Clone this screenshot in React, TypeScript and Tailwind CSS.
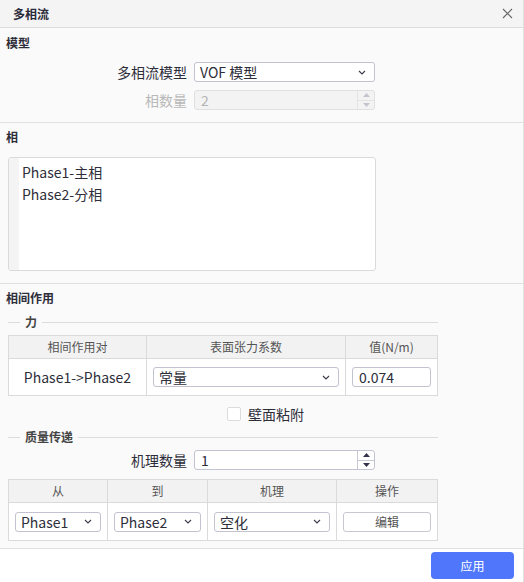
import React from "react";

const Chevron = () => (
  <svg width="8" height="5" viewBox="0 0 8 5" className="shrink-0">
    <path d="M1 1 L4 4 L7 1" fill="none" stroke="#3a3a4a" strokeWidth="1.1" />
  </svg>
);

const Select = ({ value, className = "" }: { value: string; className?: string }) => (
  <div
    className={`flex items-center justify-between h-[20px] bg-white border border-[#c2c2d0] rounded-[3px] pl-[5px] pr-[8px] text-[14px] leading-[18px] text-[#2e2e3a] ${className}`}
  >
    <span>{value}</span>
    <Chevron />
  </div>
);

const Spin = ({ value, disabled }: { value: string; disabled?: boolean }) => (
  <div
    className={`flex h-[20px] w-[181px] rounded-[3px] border ${
      disabled ? "bg-[#f3f3f3] border-[#e0e0e0] text-[#b5b5b5]" : "bg-white border-[#c2c2d0] text-[#2e2e3a]"
    }`}
  >
    <div className="flex-1 pl-[6px] text-[14px] leading-[18px]">{value}</div>
    <div className={`w-[17px] flex flex-col border-l ${disabled ? "border-[#e4e4e4]" : "border-[#c8c8d4]"}`}>
      <div className={`flex-1 flex items-center justify-center border-b ${disabled ? "border-[#e4e4e4]" : "border-[#c8c8d4]"}`}>
        <svg width="7" height="4" viewBox="0 0 7 4">
          <path d="M0 4 L3.5 0 L7 4 Z" fill={disabled ? "#c4c4cc" : "#33334a"} />
        </svg>
      </div>
      <div className="flex-1 flex items-center justify-center">
        <svg width="7" height="4" viewBox="0 0 7 4">
          <path d="M0 0 L3.5 4 L7 0 Z" fill={disabled ? "#c4c4cc" : "#33334a"} />
        </svg>
      </div>
    </div>
  </div>
);

const Legend = ({ text }: { text: string }) => (
  <div className="ml-[2px] w-[430px] h-[18px] flex items-center">
    <div className="w-[12px] h-px bg-[#dcdcdc]" />
    <div className="px-[5px] text-[12px] font-bold leading-[18px] text-[#444]">{text}</div>
    <div className="flex-1 h-px bg-[#dcdcdc]" />
  </div>
);

const HCell = ({ children, last }: { children: React.ReactNode; last?: boolean }) => (
  <div className={`flex items-center justify-center text-[12px] text-[#555] ${last ? "" : "border-r border-[#dadada]"}`}>
    {children}
  </div>
);

const BCell = ({ children, last, className = "" }: { children: React.ReactNode; last?: boolean; className?: string }) => (
  <div className={`flex items-center px-[6px] ${last ? "" : "border-r border-[#dadada]"} ${className}`}>{children}</div>
);

export default function App() {
  return (
    <div className="w-[524px] h-[582px] flex flex-col bg-[#fafafa] border-r border-[#e2e2e2] font-['Noto_Sans_CJK_SC',sans-serif] text-[#2e2e3a] overflow-hidden">
      {/* Title bar */}
      <div className="h-[28px] shrink-0 flex items-center justify-between pl-[13px] pr-[10px] bg-[#f4f4f4] border-b border-[#dcdcdc]">
        <span className="text-[12px] font-bold leading-[16px] text-[#2a2a3a]">多相流</span>
        <svg width="11" height="11" viewBox="0 0 11 11">
          <path d="M1 1 L10 10 M10 1 L1 10" stroke="#666" strokeWidth="1.1" />
        </svg>
      </div>

      {/* 模型 */}
      <div className="shrink-0 px-[6px] pt-[6px] pb-[12px] border-b border-[#e0e0e0]">
        <div className="h-[18px] text-[12px] font-bold leading-[18px]">模型</div>
        <div className="mt-[10px] flex items-center gap-[7px]">
          <div className="w-[181px] text-right text-[14px] leading-[19px]">多相流模型</div>
          <Select value="VOF 模型" className="w-[181px]" />
        </div>
        <div className="mt-[8px] flex items-center gap-[7px]">
          <div className="w-[181px] text-right text-[14px] leading-[19px] text-[#b8b8b8]">相数量</div>
          <Spin value="2" disabled />
        </div>
      </div>

      {/* 相 */}
      <div className="shrink-0 px-[6px] pt-[5px] pb-[12px] border-b border-[#e0e0e0]">
        <div className="h-[18px] text-[12px] font-bold leading-[18px]">相</div>
        <div className="mt-[11px] ml-[2px] w-[368px] h-[114px] flex bg-white border border-[#dadada] rounded-[3px] overflow-hidden">
          <div className="w-[10px] bg-[#f4f4f4]" />
          <div className="pl-[3px] pt-[3px] text-[14px] leading-[22px]">
            <div>Phase1-主相</div>
            <div>Phase2-分相</div>
          </div>
        </div>
      </div>

      {/* 相间作用 */}
      <div className="shrink-0 px-[6px] pt-[5px] pb-[7px] border-b border-[#e0e0e0]">
        <div className="h-[18px] text-[12px] font-bold leading-[18px]">相间作用</div>
        <div className="mt-[6px]">
          <Legend text="力" />
        </div>
        <div className="mt-[4px] ml-[2px] w-[430px] border border-[#dadada]">
          <div className="grid grid-cols-[138px_199px_91px] h-[23px] bg-[#f2f2f2] border-b border-[#dadada]">
            <HCell>相间作用对</HCell>
            <HCell>表面张力系数</HCell>
            <HCell last>值(N/m)</HCell>
          </div>
          <div className="grid grid-cols-[138px_199px_91px] h-[36px] bg-white">
            <BCell className="justify-center text-[14px]">Phase1-&gt;Phase2</BCell>
            <BCell>
              <Select value="常量" className="w-full" />
            </BCell>
            <BCell last>
              <div className="w-full h-[20px] bg-white border border-[#c2c2d0] rounded-[3px] pl-[6px] text-[14px] leading-[18px]">0.074</div>
            </BCell>
          </div>
        </div>
        <div className="mt-[9px] h-[18px] flex items-center pl-[221px]">
          <div className="w-[14px] h-[14px] bg-white border border-[#dcdcdc] rounded-[2px]" />
          <span className="ml-[7px] text-[14px] leading-[18px]">壁面粘附</span>
        </div>
        <div className="mt-[5px]">
          <Legend text="质量传递" />
        </div>
        <div className="mt-[4px] flex items-center gap-[7px]">
          <div className="w-[181px] text-right text-[14px] leading-[19px]">机理数量</div>
          <Spin value="1" />
        </div>
        <div className="mt-[9px] ml-[2px] w-[430px] border border-[#dadada]">
          <div className="grid grid-cols-[99px_100px_129px_100px] h-[23px] bg-[#f2f2f2] border-b border-[#dadada]">
            <HCell>从</HCell>
            <HCell>到</HCell>
            <HCell>机理</HCell>
            <HCell last>操作</HCell>
          </div>
          <div className="grid grid-cols-[99px_100px_129px_100px] h-[37px] bg-white">
            <BCell>
              <Select value="Phase1" className="w-full" />
            </BCell>
            <BCell>
              <Select value="Phase2" className="w-full" />
            </BCell>
            <BCell>
              <Select value="空化" className="w-full" />
            </BCell>
            <BCell last>
              <div className="w-full h-[20px] bg-white border border-[#c8c8d0] rounded-[3px] text-center text-[12px] leading-[18px] text-[#555]">编辑</div>
            </BCell>
          </div>
        </div>
      </div>

      {/* Footer */}
      <div className="flex-1 bg-white flex justify-end items-start pt-[3px] pr-[9px]">
        <div className="w-[83px] h-[27px] rounded-[4px] bg-[#5077fb] text-white text-[12px] leading-[27px] text-center">应用</div>
      </div>
    </div>
  );
}
